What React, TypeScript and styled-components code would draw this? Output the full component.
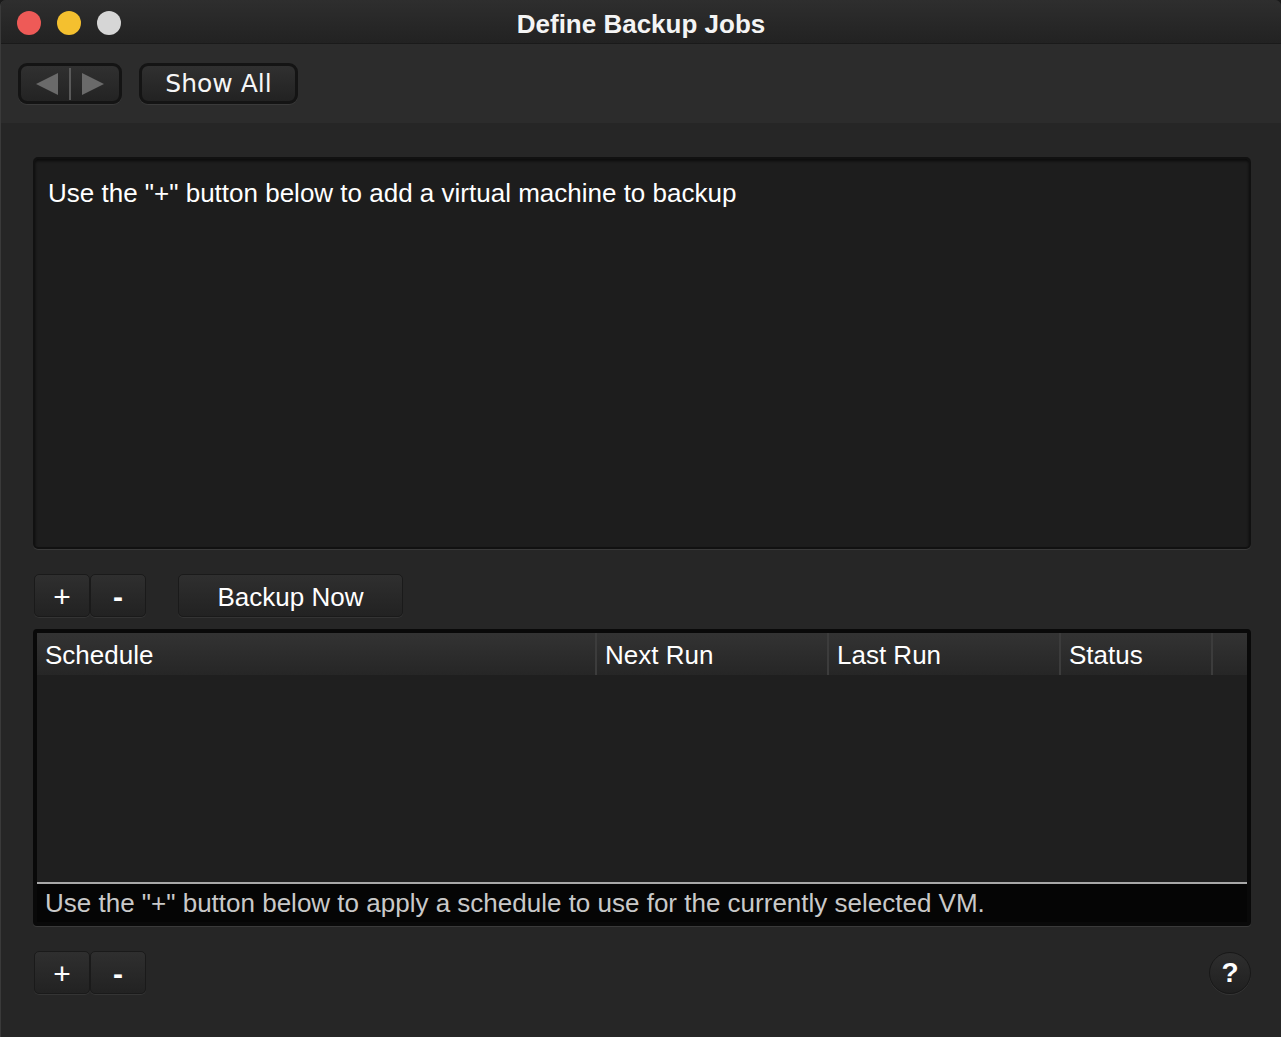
import React from "react";
import styled, { createGlobalStyle } from "styled-components";

const GlobalStyle = createGlobalStyle`
  html, body {
    margin: 0;
    padding: 0;
    background: #1a1a1a;
  }
  * {
    box-sizing: border-box;
  }
`;

const columns = [
  { label: "Schedule", width: 560 },
  { label: "Next Run", width: 232 },
  { label: "Last Run", width: 232 },
  { label: "Status", width: 152 },
  { label: "", width: 33 },
];

const App = () => {
  return (
    <>
      <GlobalStyle />
      <Window>
        <TitleBar>
          <Lights>
            <Light color="#ee5a57" />
            <Light color="#f4c02f" />
            <Light color="#d6d6d6" />
          </Lights>
          <Title>Define Backup Jobs</Title>
        </TitleBar>

        <Toolbar>
          <NavGroup>
            <NavHalf>
              <svg width="26" height="24" viewBox="0 0 26 24">
                <polygon points="24,1 24,23 2,12" fill="#6a6a6a" />
              </svg>
            </NavHalf>
            <NavDivider />
            <NavHalf>
              <svg width="26" height="24" viewBox="0 0 26 24">
                <polygon points="2,1 2,23 24,12" fill="#6a6a6a" />
              </svg>
            </NavHalf>
          </NavGroup>
          <ShowAllButton>Show All</ShowAllButton>
        </Toolbar>

        <Content>
          <MachinePanel>
            <PanelText>
              Use the "+" button below to add a virtual machine to backup
            </PanelText>
          </MachinePanel>

          <ButtonRow>
            <SquareButton>+</SquareButton>
            <SquareButton bold>-</SquareButton>
            <WideButton>Backup Now</WideButton>
          </ButtonRow>

          <Table>
            <HeaderRow>
              {columns.map((col, i) => (
                <HeaderCell key={i} style={{ width: col.width }}>
                  {col.label}
                </HeaderCell>
              ))}
            </HeaderRow>
            <TableBody />
            <Footer>
              Use the "+" button below to apply a schedule to use for the
              currently selected VM.
            </Footer>
          </Table>

          <BottomRow>
            <Pair>
              <SquareButton>+</SquareButton>
              <SquareButton bold>-</SquareButton>
            </Pair>
            <HelpButton>?</HelpButton>
          </BottomRow>
        </Content>
      </Window>
    </>
  );
};

export default App;

const Window = styled.div`
  width: 1281px;
  height: 1037px;
  display: flex;
  flex-direction: column;
  background: #262626;
  border-left: 1px solid #3a3a3a;
  border-radius: 6px 6px 0 0;
  overflow: hidden;
  font-family: "Liberation Sans", Arial, sans-serif;
  color: #ffffff;
`;

const TitleBar = styled.div`
  position: relative;
  height: 44px;
  flex-shrink: 0;
  display: flex;
  align-items: center;
  justify-content: center;
  background: linear-gradient(#2e2e2e, #222222);
  border-bottom: 1px solid #1a1a1a;
`;

const Lights = styled.div`
  position: absolute;
  left: 16px;
  top: 11px;
  display: flex;
  gap: 16px;
`;

const Light = styled.div<{ color: string }>`
  width: 24px;
  height: 24px;
  border-radius: 50%;
  background: ${(p) => p.color};
`;

const Title = styled.div`
  font-size: 26px;
  font-weight: bold;
  color: #f4f4f4;
  margin-top: 6px;
`;

const Toolbar = styled.div`
  height: 79px;
  flex-shrink: 0;
  display: flex;
  align-items: center;
  gap: 17px;
  padding: 0 0 0 17px;
  background: #2c2c2c;
`;

const NavGroup = styled.div`
  width: 104px;
  height: 41px;
  display: flex;
  align-items: center;
  padding: 0 4px;
  border-radius: 9px;
  background: linear-gradient(#303030, #232323);
  border: 3px solid #141414;
  box-shadow: 0 1px 0 #3a3a3a;
`;

const NavHalf = styled.div`
  flex: 1;
  display: flex;
  align-items: center;
  justify-content: center;
`;

const NavDivider = styled.div`
  width: 2px;
  height: 32px;
  background: #5a5a5a;
`;

const ShowAllButton = styled.div`
  width: 159px;
  height: 41px;
  display: flex;
  align-items: center;
  justify-content: center;
  border-radius: 9px;
  background: linear-gradient(#303030, #222222);
  border: 3px solid #141414;
  box-shadow: 0 1px 0 #3a3a3a;
  font-family: "DejaVu Sans", sans-serif;
  font-size: 25px;
  color: #f6f6f6;
`;

const Content = styled.div`
  flex: 1;
  display: flex;
  flex-direction: column;
  padding: 34px 30px 0 32px;
`;

const MachinePanel = styled.div`
  height: 392px;
  background: #1d1d1d;
  border-radius: 5px;
  border: 2px solid #111111;
  box-shadow: inset 0 2px 3px rgba(0, 0, 0, 0.6), 0 1px 0 #3a3a3a;
  padding: 19px 13px;
`;

const PanelText = styled.div`
  font-size: 26px;
  color: #ffffff;
`;

const ButtonRow = styled.div`
  display: flex;
  align-items: center;
  margin-top: 25px;
  padding-left: 1px;
`;

const Pair = styled.div`
  display: flex;
`;

const SquareButton = styled.div<{ bold?: boolean }>`
  width: 56px;
  height: 43px;
  display: flex;
  align-items: center;
  justify-content: center;
  border-radius: 5px;
  background: linear-gradient(#2f2f2f, #222222);
  border: 1px solid #1a1a1a;
  box-shadow: 0 1px 0 #343434;
  font-size: 30px;
  font-weight: ${(p) => (p.bold ? "bold" : "normal")};
  color: #ffffff;
  padding-top: 3px;
`;

const WideButton = styled(SquareButton)`
  width: 225px;
  margin-left: 32px;
  font-size: 26px;
  padding-top: 3px;
`;

const Table = styled.div`
  height: 297px;
  margin-top: 12px;
  display: flex;
  flex-direction: column;
  background: #1f1f1f;
  border: 4px solid #090909;
  border-radius: 4px;
  box-shadow: 0 1px 0 #3a3a3a;
  overflow: hidden;
`;

const HeaderRow = styled.div`
  height: 42px;
  flex-shrink: 0;
  display: flex;
  background: linear-gradient(#333333, #262626);
`;

const HeaderCell = styled.div`
  flex-shrink: 0;
  height: 100%;
  display: flex;
  align-items: center;
  padding: 3px 0 0 8px;
  border-right: 2px solid #3c3c3c;
  font-size: 26px;
  color: #ffffff;
  &:last-child {
    border-right: none;
  }
`;

const TableBody = styled.div`
  flex: 1;
  background: #1f1f1f;
`;

const Footer = styled.div`
  height: 40px;
  flex-shrink: 0;
  display: flex;
  align-items: center;
  padding-left: 8px;
  background: #050505;
  border-top: 2px solid #a8a8a8;
  font-size: 26px;
  color: #c9c9c9;
`;

const BottomRow = styled.div`
  display: flex;
  align-items: center;
  justify-content: space-between;
  margin-top: 25px;
  padding-left: 1px;
`;

const HelpButton = styled.div`
  width: 42px;
  height: 42px;
  display: flex;
  align-items: center;
  justify-content: center;
  border-radius: 50%;
  background: linear-gradient(#2e2e2e, #202020);
  border: 1px solid #181818;
  box-shadow: 0 1px 0 #343434;
  font-size: 28px;
  font-weight: bold;
  color: #ffffff;
`;
